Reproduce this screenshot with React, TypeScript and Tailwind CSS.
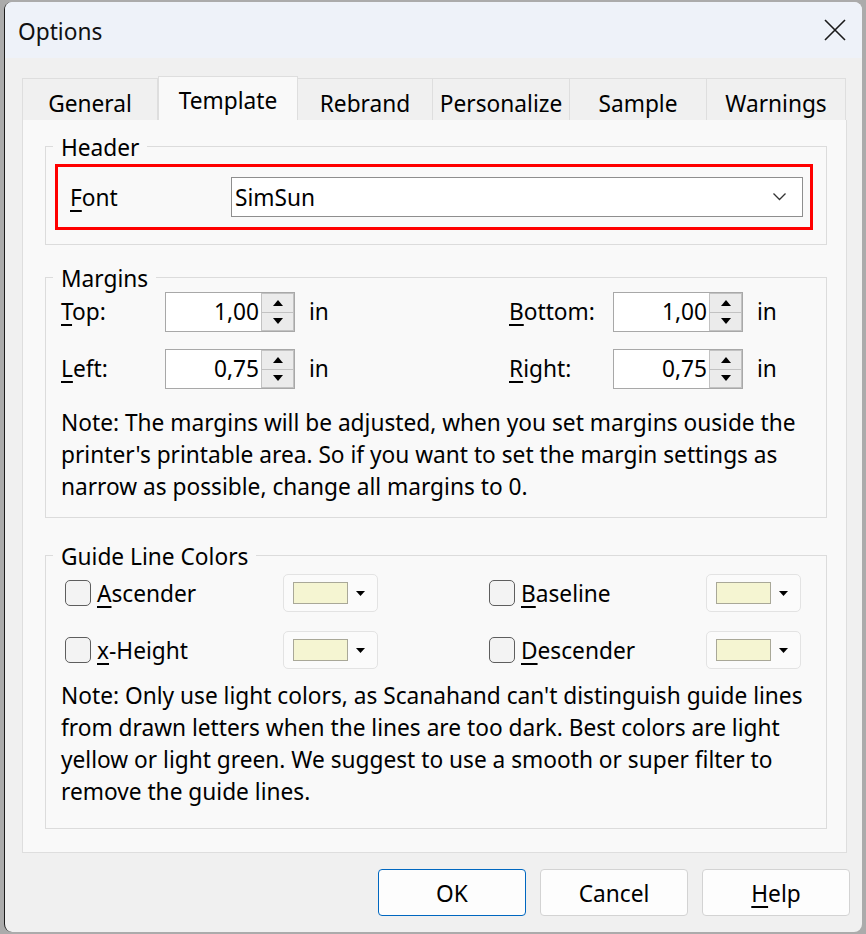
import React from "react";

const FONT = { fontFamily: '"Noto Sans", "Open Sans", sans-serif' };

function U({ c }: { c: string }) {
  return <span className="underline underline-offset-[4px] decoration-[1.5px]">{c}</span>;
}

function Spin({ value }: { value: string }) {
  return (
    <div className="flex h-[40px] w-[130px] border border-[#a8a8a8] bg-white">
      <div className="flex flex-1 items-center justify-end pr-[2px] leading-none">{value}</div>
      <div className="flex w-[33px] flex-col">
        <div className="flex flex-1 items-center justify-center border border-[#c2c2c2] bg-[#ebebeb]">
          <svg width="10" height="6" viewBox="0 0 10 6"><polygon points="5,0 10,6 0,6" fill="#000" /></svg>
        </div>
        <div className="flex flex-1 items-center justify-center border border-t-0 border-[#c2c2c2] bg-[#ebebeb]">
          <svg width="10" height="6" viewBox="0 0 10 6"><polygon points="0,0 10,0 5,6" fill="#000" /></svg>
        </div>
      </div>
    </div>
  );
}

function ColorBtn() {
  return (
    <div className="flex h-[38px] w-[95px] items-center rounded-[5px] border border-[#e3e3e3] bg-[#fbfbfb] pl-[9px]">
      <div className="h-[22px] w-[55px] border border-[#a9a898] bg-[#f5f5d2]" />
      <svg className="ml-[8px]" width="9" height="5" viewBox="0 0 9 5"><polygon points="0,0 9,0 4.5,5" fill="#000" /></svg>
    </div>
  );
}

function Check({ label }: { label: React.ReactNode }) {
  return (
    <div className="flex items-center">
      <div className="h-[26px] w-[26px] rounded-[5px] border-[1.5px] border-[#5e5e5e] bg-[#f3f3f3]" />
      <span className="ml-[6px] pt-[2px]">{label}</span>
    </div>
  );
}

function Legend({ children }: { children: React.ReactNode }) {
  return <legend className="ml-[7px] px-[8px] pt-[4px] leading-[26px]">{children}</legend>;
}

const tabs = [
  { name: "General", w: 136 },
  { name: "Template", w: 140, sel: true },
  { name: "Rebrand", w: 135 },
  { name: "Personalize", w: 137 },
  { name: "Sample", w: 137 },
  { name: "Warnings", w: 139 },
];

export default function App() {
  return (
    <div className="h-[934px] w-[866px] overflow-hidden bg-[#ababab] pl-[4px] pt-[2px] text-[22.7px] text-black" style={FONT}>
      <div className="flex h-[930px] w-[858px] flex-col overflow-hidden rounded-[8px] border-l-[1px] border-[#1c1c1c] bg-[#f0f0f0]">
        {/* title bar */}
        <div className="flex h-[56px] items-center justify-between bg-[#eef2f9] pl-[13px] pr-[16px]">
          <span className="pt-[4px] text-[#111]">Options</span>
          <svg width="22" height="22" viewBox="0 0 22 22">
            <path d="M1 1 L21 21 M21 1 L1 21" stroke="#1a1a1a" strokeWidth="1.6" />
          </svg>
        </div>
        {/* body */}
        <div className="flex flex-col pl-[17px] pt-[18px]">
          <div className="flex h-[44px] items-end">
            {tabs.map((t) =>
              t.sel ? (
                <div
                  key={t.name}
                  className="flex h-[44px] items-center justify-center border border-b-0 border-[#dedede] bg-[#f9f9f9] pt-[6px]"
                  style={{ width: t.w }}
                >
                  {t.name}
                </div>
              ) : (
                <div
                  key={t.name}
                  className="flex h-[42px] items-center justify-center border border-l-0 border-b-0 border-[#dedede] bg-[#f0f0f0] pt-[9px] first:border-l"
                  style={{ width: t.w }}
                >
                  {t.name}
                </div>
              )
            )}
          </div>
          {/* panel */}
          <div className="flex h-[733px] w-[825px] flex-col border border-t-0 border-[#dedede] bg-[#f9f9f9] pt-[11px]">
            {/* Header */}
            <fieldset className="ml-[22px] w-[782px] border border-[#dcdcdc] pb-[14px] pt-[3px]">
              <Legend>Header</Legend>
              <div className="ml-[9px] flex h-[66px] w-[758px] items-center border-[3px] border-[#ff0000] pl-[12px] pr-[7px]">
                <span className="w-[161px] pt-[2px]"><U c="F" />ont</span>
                <div className="flex h-[40px] flex-1 items-center justify-between border border-[#8e8e8e] bg-white pl-[3px] pr-[16px]">
                  <span className="pt-[2px]">SimSun</span>
                  <svg width="13" height="8" viewBox="0 0 13 8"><polyline points="0.5,0.5 6.5,6.5 12.5,0.5" fill="none" stroke="#333" strokeWidth="1.3" /></svg>
                </div>
              </div>
            </fieldset>
            {/* Margins */}
            <fieldset className="ml-[22px] mt-[17px] w-[782px] border border-[#dcdcdc] pb-[14px]">
              <Legend>Margins</Legend>
              <div className="pl-[15px]">
                <div className="grid grid-cols-[448px_1fr] gap-y-[17px]">
                  {[
                    [<><U c="T" />op:</>, "1,00", <><U c="B" />ottom:</>, "1,00"],
                    [<><U c="L" />eft:</>, "0,75", <><U c="R" />ight:</>, "0,75"],
                  ].map((row, i) => (
                    <React.Fragment key={i}>
                      <div className="flex h-[40px] items-center">
                        <span className="w-[104px]">{row[0]}</span>
                        <Spin value={row[1] as string} />
                        <span className="ml-[14px]">in</span>
                      </div>
                      <div className="flex h-[40px] items-center">
                        <span className="w-[104px]">{row[2]}</span>
                        <Spin value={row[3] as string} />
                        <span className="ml-[14px]">in</span>
                      </div>
                    </React.Fragment>
                  ))}
                </div>
                <p className="mt-[18px] leading-[32px]">
                  Note: The margins will be adjusted, when you set margins ouside the<br />
                  printer's printable area. So if you want to set the margin settings as<br />
                  narrow as possible, change all margins to 0.
                </p>
              </div>
            </fieldset>
            {/* Guide Line Colors */}
            <fieldset className="ml-[22px] mt-[22px] w-[782px] border border-[#dcdcdc] pb-[20px] pt-[4px]">
              <Legend>Guide Line Colors</Legend>
              <div className="pl-[15px]">
                <div className="grid grid-cols-[424px_1fr] gap-y-[19px] pl-[4px]">
                  {[
                    [<><U c="A" />scender</>, <><U c="B" />aseline</>],
                    [<><U c="x" />-Height</>, <><U c="D" />escender</>],
                  ].map((row, i) => (
                    <React.Fragment key={i}>
                      <div className="flex h-[38px] items-center">
                        <div className="w-[218px]"><Check label={row[0]} /></div>
                        <ColorBtn />
                      </div>
                      <div className="flex h-[38px] items-center">
                        <div className="w-[217px]"><Check label={row[1]} /></div>
                        <ColorBtn />
                      </div>
                    </React.Fragment>
                  ))}
                </div>
                <p className="mt-[11px] leading-[32px]">
                  Note: Only use light colors, as Scanahand can't distinguish guide lines<br />
                  from drawn letters when the lines are too dark. Best colors are light<br />
                  yellow or light green. We suggest to use a smooth or super filter to<br />
                  remove the guide lines.
                </p>
              </div>
            </fieldset>
          </div>
          {/* buttons */}
          <div className="mt-[16px] flex w-[828px] justify-end gap-[14px]">
            <button className="h-[47px] w-[148px] rounded-[4px] border border-[#0067c0] bg-[#fdfdfd] pt-[3px]">OK</button>
            <button className="h-[47px] w-[148px] rounded-[4px] border border-[#d3d3d3] bg-[#fdfdfd] pt-[3px]">Cancel</button>
            <button className="h-[47px] w-[148px] rounded-[4px] border border-[#d3d3d3] bg-[#fdfdfd] pt-[3px]"><U c="H" />elp</button>
          </div>
        </div>
      </div>
    </div>
  );
}
